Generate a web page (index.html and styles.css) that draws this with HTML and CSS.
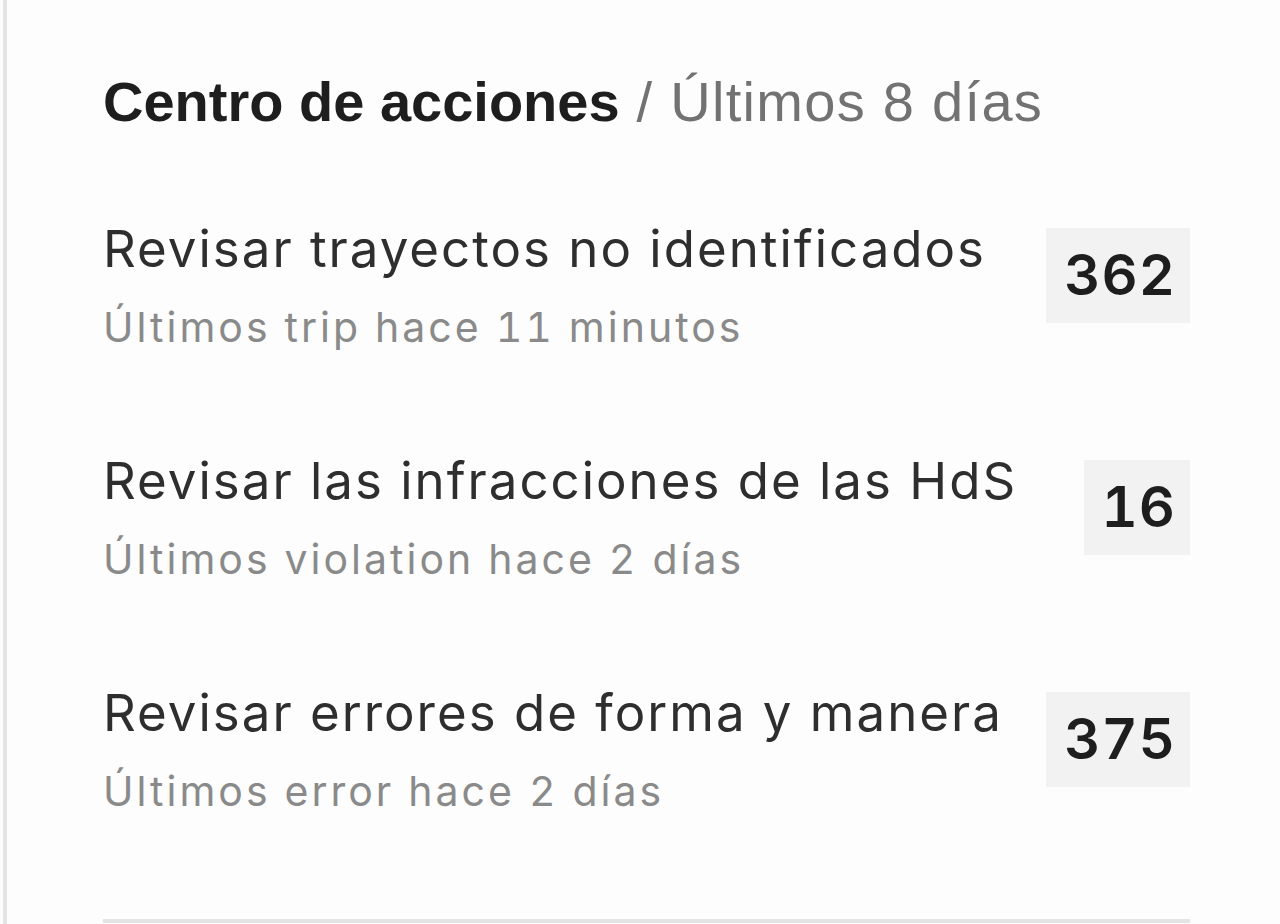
FILE: index.html
```html
<!DOCTYPE html>
<html lang="es">
<head>
<meta charset="utf-8">
<title>Centro de acciones</title>
<link rel="stylesheet" href="styles.css">
</head>
<body>
<div class="panel">
  <div class="content">
    <h2 class="heading"><span class="heading-main">Centro de acciones</span><span class="heading-sub"> / Últimos 8 días</span></h2>
    <ul class="actions">
      <li class="action">
        <div class="action-text">
          <div class="action-title">Revisar trayectos no identificados</div>
          <div class="action-meta">Últimos trip hace 11 minutos</div>
        </div>
        <div class="badge">362</div>
      </li>
      <li class="action">
        <div class="action-text">
          <div class="action-title">Revisar las infracciones de las HdS</div>
          <div class="action-meta">Últimos violation hace 2 días</div>
        </div>
        <div class="badge">16</div>
      </li>
      <li class="action">
        <div class="action-text">
          <div class="action-title">Revisar errores de forma y manera</div>
          <div class="action-meta">Últimos error hace 2 días</div>
        </div>
        <div class="badge">375</div>
      </li>
    </ul>
    <div class="divider"></div>
  </div>
</div>
</body>
</html>
```
FILE: styles.css
```css
html, body {
  margin: 0;
  padding: 0;
  background: #fdfdfd;
}
.panel {
  height: 924px;
  box-sizing: border-box;
  border-left: 4px solid #e4e4e4;
  margin-left: 3px;
  overflow: hidden;
}
.content {
  padding-left: 96px;
  width: 1087px;
  padding-top: 67px;
  display: flex;
  flex-direction: column;
}
.heading {
  margin: 0;
  font-family: "Liberation Sans", Arial, sans-serif;
  font-size: 56px;
  line-height: 70px;
  font-weight: 400;
  white-space: nowrap;
}
.heading-main {
  color: #1e1e1e;
  font-weight: 700;
}
.heading-sub {
  color: #727272;
  letter-spacing: 1.3px;
}
.actions {
  list-style: none;
  margin: 0;
  padding: 0;
  margin-top: 81px;
  display: flex;
  flex-direction: column;
  gap: 95px;
}
.action {
  display: flex;
  align-items: flex-start;
  justify-content: space-between;
}
.action-text {
  display: flex;
  flex-direction: column;
  font-family: Inter, "Noto Sans", sans-serif;
  white-space: nowrap;
}
.action-title {
  font-size: 51px;
  line-height: 62px;
  letter-spacing: 2px;
  color: #2e2e2e;
}
.action-meta {
  margin-top: 19px;
  font-size: 41px;
  line-height: 56px;
  letter-spacing: 3px;
  font-variant-numeric: tabular-nums;
  color: #8a8a8a;
}
.badge {
  background: #f2f2f2;
  font-family: Inter, "Liberation Sans", sans-serif;
  font-size: 56px;
  font-weight: 600;
  letter-spacing: 1px;
  font-variant-numeric: tabular-nums;
  color: #1e1e1e;
  line-height: 95px;
  padding: 0 14px 0 18px;
  margin-top: 10px;
}
.divider {
  margin-top: 100px;
  height: 4px;
  background: #e4e4e4;
}
```
